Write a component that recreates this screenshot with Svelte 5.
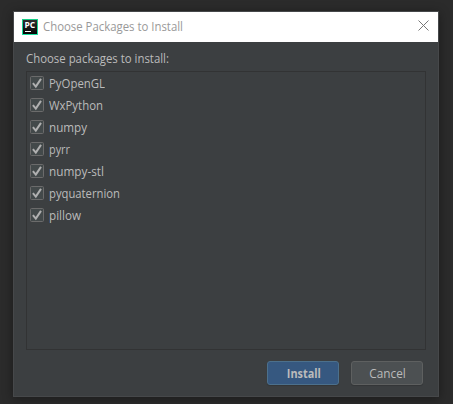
<script>
  const packages = [
    { name: 'PyOpenGL', width: 56 },
    { name: 'WxPython', width: 54 },
    { name: 'numpy', width: 38 },
    { name: 'pyrr', width: 21 },
    { name: 'numpy-stl', width: 55 },
    { name: 'pyquaternion', width: 71 },
    { name: 'pillow', width: 32 },
  ];

  // Stretches or narrows a label to the given width in pixels.
  function fit(node, width) {
    const natural = node.getBoundingClientRect().width;
    node.style.transform = `scaleX(${width / natural})`;
  }
</script>

<div class="desktop">
  <section class="dialog">
    <header>
      <svg class="logo" width="16" height="16" viewBox="0 0 16 16">
        <defs>
          <linearGradient id="edge" x1="0" y1="0" x2="0" y2="1">
            <stop offset="0" stop-color="#16cf87" />
            <stop offset="1" stop-color="#19dfa0" />
          </linearGradient>
          <linearGradient id="face" x1="0" y1="0" x2="0" y2="1">
            <stop offset="0" stop-color="#2b2e2d" />
            <stop offset="1" stop-color="#050606" />
          </linearGradient>
        </defs>
        <rect width="16" height="16" fill="url(#edge)" />
        <rect x="1" y="1" width="14" height="14" fill="url(#face)" />
        <text x="2.4" y="9" textLength="10.8" lengthAdjust="spacingAndGlyphs">PC</text>
        <rect x="3" y="12" width="6" height="1" fill="#fff" />
      </svg>
      <h1><span class="fit" use:fit={140}>Choose Packages to Install</span></h1>
      <svg class="close" width="11" height="11" viewBox="0 0 11 11">
        <path d="M.5.5l10 10M10.5.5l-10 10" stroke="#777" stroke-width="1" />
      </svg>
    </header>

    <main>
      <p><span class="fit" use:fit={143}>Choose packages to install:</span></p>
      <ul>
        {#each packages as pkg}
          <li>
            <svg width="14" height="14" viewBox="0 0 14 14">
              <rect x=".5" y=".5" width="13" height="13" rx="1" fill="#43494a" stroke="#6b6b6b" />
              <path d="M2.9 7.2l2.9 3.4L11 2.9" fill="none" stroke="#b0b0b0" stroke-width="2" />
            </svg>
            <span class="fit" use:fit={pkg.width}>{pkg.name}</span>
          </li>
        {/each}
      </ul>
      <footer>
        <button class="primary"><span use:fit={34}>Install</span></button>
        <button><span use:fit={36.5}>Cancel</span></button>
      </footer>
    </main>
  </section>
</div>

<style>
  :global(body) {
    margin: 0;
    background: #2b2b2b;
  }
  .desktop {
    box-sizing: border-box;
    width: 453px;
    height: 404px;
    padding: 11px 14px 7px 13px;
    overflow: hidden;
    background: #2b2b2b;
    font-family: "Open Sans", "Noto Sans", sans-serif;
    font-size: 12px;
    line-height: 16px;
    color: #bbb;
  }
  .dialog {
    box-sizing: border-box;
    height: 386px;
    border: 1px solid #46484a;
    background: #3c3f41;
    box-shadow: 0 2px 10px rgba(0, 0, 0, 0.38);
  }
  header {
    display: flex;
    align-items: center;
    box-sizing: border-box;
    height: 30px;
    padding: 0 9px 0 8px;
    background: #fff;
    color: #999;
  }
  h1 {
    flex: 1;
    margin: 0 0 0 5px;
    font-size: 12px;
    font-weight: 400;
  }
  .logo text {
    font: 700 8.4px "Open Sans", sans-serif;
    fill: #fff;
  }
  .close {
    margin-bottom: 3px;
  }
  .fit {
    display: inline-block;
    transform-origin: 0 50%;
    white-space: nowrap;
  }
  main {
    padding: 9px 12px 0;
  }
  p {
    margin: 0 0 4px;
  }
  ul {
    box-sizing: border-box;
    height: 279px;
    margin: 0;
    padding: 0 0 0 3px;
    border: 1px solid #323334;
    list-style: none;
  }
  li {
    display: flex;
    align-items: center;
    gap: 5px;
    height: 22px;
  }
  li .fit {
    padding-top: 2px;
  }
  footer {
    display: flex;
    justify-content: flex-end;
    gap: 12px;
    padding: 11px 3px 0 0;
  }
  button {
    box-sizing: border-box;
    display: flex;
    align-items: center;
    justify-content: center;
    width: 72px;
    height: 24px;
    padding: 2px 0 0 1px;
    border: 1px solid #5e6060;
    border-radius: 3px;
    background: #4c5052;
    box-shadow: 0 1px 1px rgba(0, 0, 0, 0.15);
    color: #bbb;
    font: inherit;
  }
  button span {
    display: inline-block;
  }
  .primary {
    padding-left: 2px;
    border-color: #4c708c;
    background: #365880;
    font-weight: 700;
  }
</style>
